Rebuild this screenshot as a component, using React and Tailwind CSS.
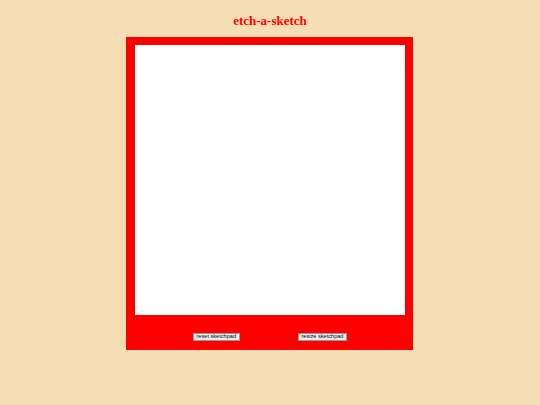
export default function App() {
  const buttons = ['reset sketchpad', 'resize sketchpad']

  return (
    <div className="h-[405px] bg-[#f5deb3] flex flex-col items-center">
      <h1
        className="mt-[13px] mb-[9px] text-[13px] leading-[15px] font-bold text-[#f00]"
        style={{ fontFamily: '"Liberation Serif", serif' }}
      >
        etch-a-sketch
      </h1>

      {/* red frame around the drawing surface */}
      <div className="w-[287px] h-[313px] bg-[#f00] pl-[9px] pr-[8px] pt-[8px] ml-[-1px]">
        <div className="w-[270px] h-[270px] bg-white" />
        <div className="w-[270px] flex justify-evenly pt-[18px]">
          {buttons.map((label) => (
            <button
              key={label}
              className="h-[8px] px-[3px] flex items-center bg-[#f0f0f0] border border-[#999] text-[5.6px] leading-none text-black"
              style={{ fontFamily: '"Liberation Sans", Arial, sans-serif' }}
            >
              {label}
            </button>
          ))}
        </div>
      </div>
    </div>
  )
}
